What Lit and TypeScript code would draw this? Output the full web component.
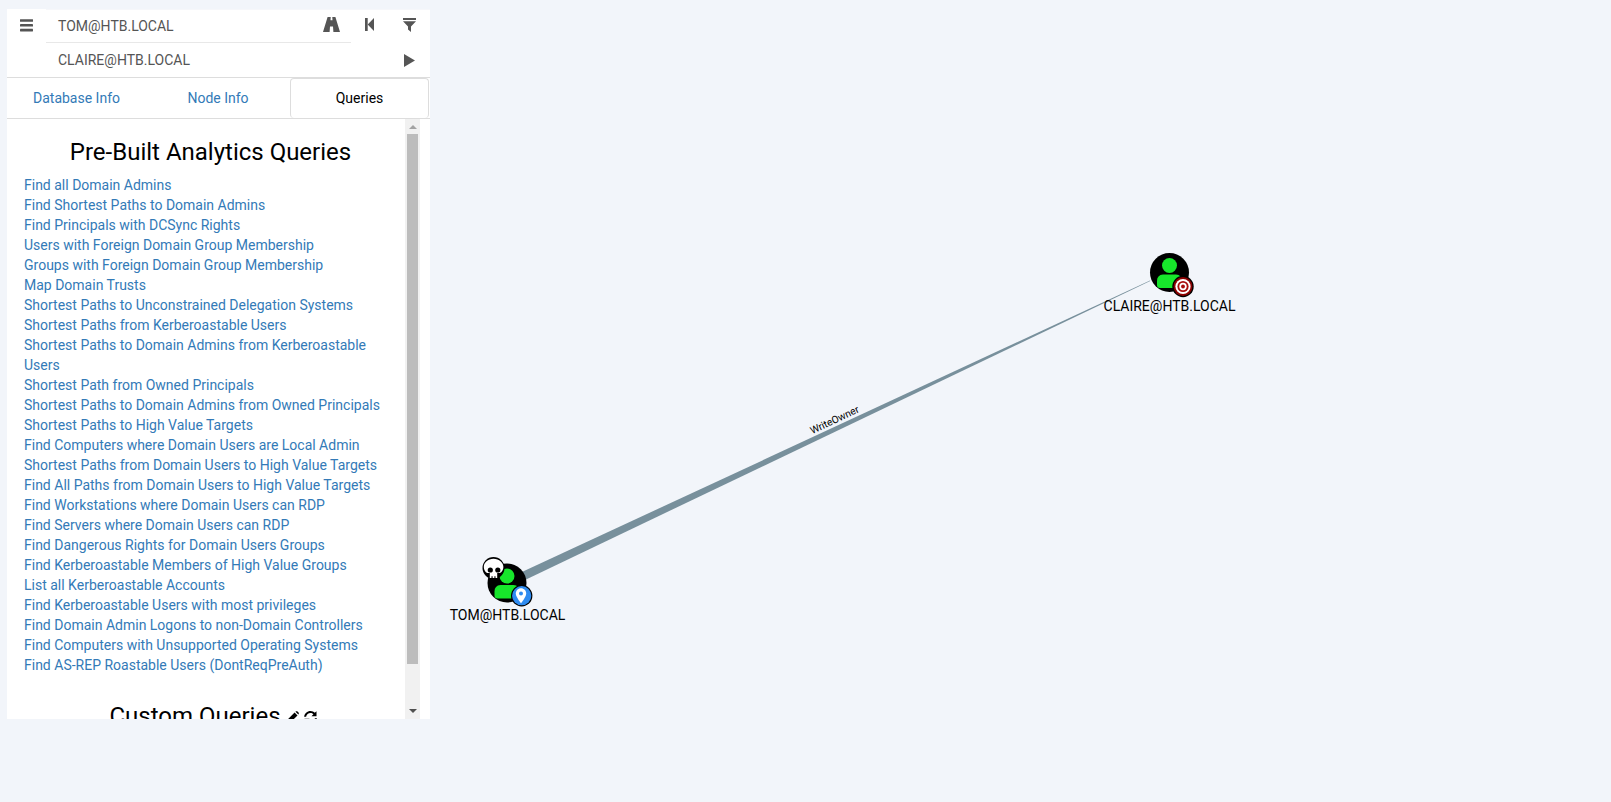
import { LitElement, html, css, svg } from "lit";
import { customElement } from "lit/decorators.js";

const LINKS = [
  "Find all Domain Admins",
  "Find Shortest Paths to Domain Admins",
  "Find Principals with DCSync Rights",
  "Users with Foreign Domain Group Membership",
  "Groups with Foreign Domain Group Membership",
  "Map Domain Trusts",
  "Shortest Paths to Unconstrained Delegation Systems",
  "Shortest Paths from Kerberoastable Users",
  "Shortest Paths to Domain Admins from Kerberoastable Users",
  "Shortest Path from Owned Principals",
  "Shortest Paths to Domain Admins from Owned Principals",
  "Shortest Paths to High Value Targets",
  "Find Computers where Domain Users are Local Admin",
  "Shortest Paths from Domain Users to High Value Targets",
  "Find All Paths from Domain Users to High Value Targets",
  "Find Workstations where Domain Users can RDP",
  "Find Servers where Domain Users can RDP",
  "Find Dangerous Rights for Domain Users Groups",
  "Find Kerberoastable Members of High Value Groups",
  "List all Kerberoastable Accounts",
  "Find Kerberoastable Users with most privileges",
  "Find Domain Admin Logons to non-Domain Controllers",
  "Find Computers with Unsupported Operating Systems",
  "Find AS-REP Roastable Users (DontReqPreAuth)",
];

const person = (cx: number, cy: number) => svg`
  <circle cx=${cx} cy=${cy} r="19.5" fill="#000"/>
  <circle cx=${cx} cy=${cy - 7} r="7.5" fill="#17e62b"/>
  <path d="M${cx - 12.5} ${cy + 12.5} v-4 q0 -6 6 -6.5 h13 q6 .5 6 6.5 v4 q0 3 -3 3 h-19 q-3 0 -3 -3 z" fill="#17e62b"/>
`;

@customElement("app-root")
export class AppRoot extends LitElement {
  static styles = css`
    :host {
      display: block;
      position: relative;
      width: 100%;
      height: 802px;
      overflow: hidden;
      background: #f2f5fa;
      font-family: Roboto, "Liberation Sans", sans-serif;
      font-size: 14px;
      color: #000;
    }
    .graph {
      position: absolute;
      left: 0;
      top: 0;
      width: 1611px;
      height: 802px;
    }
    .graph text {
      font-family: Roboto, "Liberation Sans", sans-serif;
    }
    .panel {
      position: absolute;
      left: 7px;
      top: 9px;
      width: 423px;
      height: 710px;
      background: #fff;
      display: flex;
      flex-direction: column;
    }
    .search {
      display: grid;
      grid-template-columns: 39px 1fr;
      height: 68px;
      flex: none;
    }
    .menu {
      display: flex;
      justify-content: center;
      padding-top: 10px;
    }
    .rows {
      display: flex;
      flex-direction: column;
    }
    .row {
      position: relative;
      height: 34px;
      display: flex;
      align-items: center;
      padding-left: 12px;
      color: #555;
    }
    .row.first {
      border-top: 1px solid #f6f7fa;
      height: 34px;
      box-sizing: border-box;
      padding-bottom: 2px;
    }
    .row.first::after {
      content: "";
      position: absolute;
      left: 0;
      width: 305px;
      bottom: 0;
      border-bottom: 1px solid #e8e8e8;
    }
    .icons {
      margin-left: auto;
      display: flex;
      align-items: center;
    }
    .icon {
      display: block;
      fill: #555;
    }
    .i-road { margin-right: 25px; margin-top: -2px; }
    .i-back { margin-right: 29px; margin-top: -2px; }
    .i-filter { margin-right: 14px; margin-top: -2px; }
    .i-play { margin-right: 15px; }
    .tabs {
      flex: none;
      height: 42px;
      box-sizing: border-box;
      display: grid;
      grid-template-columns: 139px 144px 139px 1px;
      border-top: 1px solid #ddd;
      border-bottom: 1px solid #ddd;
      text-align: center;
    }
    .tab {
      color: #337ab7;
      line-height: 40px;
    }
    .tab.active {
      color: #000;
      border: 1px solid #ddd;
      border-bottom: none;
      border-radius: 4px;
      line-height: 38px;
    }
    .body {
      flex: 1;
      min-height: 0;
      display: grid;
      grid-template-columns: 398px 15px;
    }
    .content {
      overflow: hidden;
      padding: 17px 8px 0 17px;
      box-sizing: border-box;
    }
    .scrollbar {
      background: #f1f1f1;
      display: flex;
      flex-direction: column;
      align-items: center;
    }
    .arrow-up {
      margin-top: 6px;
      width: 0;
      height: 0;
      border-left: 4px solid transparent;
      border-right: 4px solid transparent;
      border-bottom: 4px solid #a3a3a3;
    }
    .thumb {
      margin-top: 5px;
      width: 11px;
      height: 530px;
      background: #bcbcbc;
    }
    .arrow-down {
      margin-top: 45px;
      width: 0;
      height: 0;
      border-left: 4px solid transparent;
      border-right: 4px solid transparent;
      border-top: 4px solid #505050;
    }
    h3 {
      margin: 0;
      font-size: 24px;
      font-weight: 400;
      line-height: 33px;
      text-align: center;
      white-space: nowrap;
    }
    .links {
      margin-top: 6px;
      display: flex;
      flex-direction: column;
    }
    .links a {
      color: #337ab7;
      line-height: 20px;
      text-decoration: none;
    }
    .custom {
      margin: 25px 0 0 5px;
      display: flex;
      justify-content: center;
      align-items: center;
      gap: 5px;
    }
    .custom svg {
      display: block;
      margin-top: 2px;
      fill: #000;
    }
  `;

  render() {
    return html`
      <svg class="graph" viewBox="0 0 1611 802">
        <polygon points="510,577.5 1150,280.6 1150.2,281 513.5,585.5" fill="#78909c"/>
        ${person(507, 583)}
        ${person(1169.5, 272.5)}
        <text x="0" y="0" font-size="10.2" text-anchor="middle" fill="#000"
          transform="translate(836 423) rotate(-25.2)">WriteOwner</text>
        <text x="507.5" y="620" font-size="14" text-anchor="middle" fill="#000">TOM@HTB.LOCAL</text>
        <text x="1169.5" y="310.5" font-size="14" text-anchor="middle" fill="#000">CLAIRE@HTB.LOCAL</text>

        <!-- skull badge -->
        <circle cx="493.5" cy="568" r="11" fill="#000"/>
        <path d="M493.5 558.7c-5.6 0-9.7 3.7-9.7 8.2 0 2.9 1.6 5 3.4 6.2h2.6v5h1.7v-1.8h1.1v1.8h1.8v-1.8h1.1v1.8h1.7v-5h2.6c1.9-1.2 3.6-3.3 3.6-6.2 0-4.5-4.2-8.2-9.9-8.2z" fill="#fff"/>
        <circle cx="490.3" cy="570" r="2.6" fill="#000"/>
        <circle cx="497.8" cy="570" r="2.6" fill="#000"/>

        <!-- location badge -->
        <circle cx="521.7" cy="595.7" r="10.7" fill="#000"/>
        <circle cx="521.7" cy="595.7" r="9.6" fill="#2e8bf0"/>
        <path d="M521 588.3c-3 0-5.2 2.3-5.2 5.2 0 3.4 5.2 9.8 5.2 9.8s5.2-6.4 5.2-9.8c0-2.9-2.2-5.2-5.2-5.2z" fill="#fff"/>
        <circle cx="521" cy="593.6" r="2" fill="#2e8bf0"/>

        <!-- target badge -->
        <circle cx="1183" cy="286.5" r="10.7" fill="#000"/>
        <circle cx="1183" cy="286.5" r="9.4" fill="#8b0000"/>
        <circle cx="1183" cy="286.5" r="7.6" fill="#fff"/>
        <circle cx="1183" cy="286.5" r="5.6" fill="#a80d0d"/>
        <circle cx="1183" cy="286.5" r="3.7" fill="#fff"/>
        <circle cx="1183" cy="286.5" r="1.9" fill="#a80d0d"/>
      </svg>

      <div class="panel">
        <div class="search">
          <div class="menu">
            <svg class="icon" width="13" height="13" viewBox="0 0 13 13">
              <rect y="0.2" width="13" height="2.6" rx=".4"/>
              <rect y="5" width="13" height="2.6" rx=".4"/>
              <rect y="9.8" width="13" height="2.6" rx=".4"/>
            </svg>
          </div>
          <div class="rows">
            <div class="row first">
              TOM@HTB.LOCAL
              <div class="icons">
                <svg class="icon i-road" width="17" height="15" viewBox="0 0 17 15">
                  <path d="M4.6 0H7.7L7.5 3.2H9.5L9.3 0H12.4L17 15H10.4L10 9.5H7L6.6 15H0Z"/>
                </svg>
                <svg class="icon i-back" width="9" height="13" viewBox="0 0 9 13">
                  <rect x="0" y="0" width="2.7" height="13"/>
                  <path d="M9 0V13L2.7 6.5Z"/>
                </svg>
                <svg class="icon i-filter" width="13" height="14" viewBox="0 0 13 14">
                  <rect x="0" y="0" width="13" height="2"/>
                  <path d="M0 3.2H13L8 8.4V14L5 11.6V8.4Z"/>
                </svg>
              </div>
            </div>
            <div class="row">
              CLAIRE@HTB.LOCAL
              <div class="icons">
                <svg class="icon i-play" width="11" height="13" viewBox="0 0 11 13">
                  <path d="M0 0L11 6.5L0 13Z"/>
                </svg>
              </div>
            </div>
          </div>
        </div>
        <div class="tabs">
          <div class="tab">Database Info</div>
          <div class="tab">Node Info</div>
          <div class="tab active">Queries</div>
        </div>
        <div class="body">
          <div class="content">
            <h3>Pre-Built Analytics Queries</h3>
            <div class="links">
              ${LINKS.map((l) => html`<a>${l}</a>`)}
            </div>
            <div class="custom">
              <h3>Custom Queries</h3>
              <svg width="13" height="13" viewBox="0 0 13 13">
                <path d="M0 13L.8 9.4 3.6 12.2ZM1.7 8.4L8.6 1.5 11.5 4.4 4.6 11.3ZM9.6.6C10.2 0 11 0 11.5.5L12.5 1.5C13 2 13 2.8 12.4 3.4L12.3 3.5 9.5 .7Z"/>
              </svg>
              <svg width="13" height="13" viewBox="0 0 13 13">
                <path d="M6.5 0C8.2 0 9.7.7 10.8 1.8L12.5.2V5.2H7.5L9.4 3.3C8.6 2.5 7.6 2 6.5 2 4.3 2 2.5 3.7 2.1 5.8H.1C.5 2.6 3.2 0 6.5 0ZM.5 7.8H5.5L3.6 9.7C4.4 10.5 5.4 11 6.5 11 8.7 11 10.5 9.3 10.9 7.2H12.9C12.5 10.4 9.8 13 6.5 13 4.8 13 3.3 12.3 2.2 11.2L.5 12.8Z"/>
              </svg>
            </div>
          </div>
          <div class="scrollbar">
            <div class="arrow-up"></div>
            <div class="thumb"></div>
            <div class="arrow-down"></div>
          </div>
        </div>
      </div>
    `;
  }
}
